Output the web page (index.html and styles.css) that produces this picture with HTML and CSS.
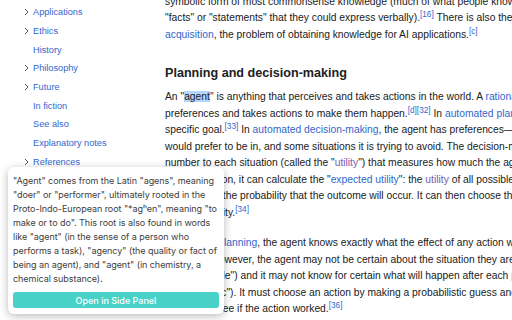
FILE: index.html
```html
<!DOCTYPE html>
<html lang="en">

<head>
	<meta charset="UTF-8" />
	<title>Artificial intelligence</title>
	<link rel="stylesheet" href="styles.css">
</head>

<body>
	<div class="page">
		<nav class="toc">
			<a class="toc-item has-kids"><span class="chev"><svg viewBox="0 0 5 8"><polyline points="1,1 4,4 1,7"/></svg></span>Applications</a>
			<a class="toc-item has-kids"><span class="chev"><svg viewBox="0 0 5 8"><polyline points="1,1 4,4 1,7"/></svg></span>Ethics</a>
			<a class="toc-item"><span class="chev"></span>History</a>
			<a class="toc-item has-kids"><span class="chev"><svg viewBox="0 0 5 8"><polyline points="1,1 4,4 1,7"/></svg></span>Philosophy</a>
			<a class="toc-item has-kids"><span class="chev"><svg viewBox="0 0 5 8"><polyline points="1,1 4,4 1,7"/></svg></span>Future</a>
			<a class="toc-item"><span class="chev"></span>In fiction</a>
			<a class="toc-item"><span class="chev"></span>See also</a>
			<a class="toc-item"><span class="chev"></span>Explanatory notes</a>
			<a class="toc-item has-kids"><span class="chev"><svg viewBox="0 0 5 8"><polyline points="1,1 4,4 1,7"/></svg></span>References</a>
		</nav>

		<main class="content">
			<p class="first">symbolic form of most commonsense knowledge (much of what people know is not represented as<br>
				"facts" or "statements" that they could express verbally).<sup class="ref">[16]</sup> There is also the difficulty of <a>knowledge</a><br>
				<a>acquisition</a>, the problem of obtaining knowledge for AI applications.<sup class="ref">[c]</sup></p>

			<h3>Planning and decision-making</h3>

			<p>An "<span class="picked">agent</span>" is anything that perceives and takes actions in the world. A <a>rational agent</a> has goals or<br>
				preferences and takes actions to make them happen.<sup class="ref">[d][32]</sup> In <a>automated planning</a>, the agent has a<br>
				specific goal.<sup class="ref">[33]</sup> In <a>automated decision-making</a>, the agent has preferences—there are some situations it<br>
				would prefer to be in, and some situations it is trying to avoid. The decision-making agent assigns a<br>
				number to each situation (called the "<a class="seen">utility</a>") that measures how much the agent prefers it. For each<br>
				possible action, it can calculate the "<a>expected utility</a>": the <a class="seen">utility</a> of all possible outcomes of the action,<br>
				weighted by the probability that the outcome will occur. It can then choose the action with the maximum<br>
				expected utility.<sup class="ref">[34]</sup></p>

			<p>In classical <a>planning</a>, the agent knows exactly what the effect of any action will be.<sup class="ref">[35]</sup> In most real-world<br>
				problems, however, the agent may not be certain about the situation they are in (it is "unknown" or<br>
				"unobservable") and it may not know for certain what will happen after each possible action (it is not<br>
				"deterministic"). It must choose an action by making a probabilistic guess and then reassess the<br>
				situation to see if the action worked.<sup class="ref">[36]</sup></p>
		</main>
	</div>

	<!-- lookup popup over the article -->
	<div class="popup">
		<p class="popup-text">"Agent" comes from the Latin "agens", meaning<br>
			"doer" or "performer", ultimately rooted in the<br>
			Proto-Indo-European root "*agʰen", meaning "to<br>
			make or to do". This root is also found in words<br>
			like "agent" (in the sense of a person who<br>
			performs a task), "agency" (the quality or fact of<br>
			being an agent), and "agent" (in chemistry, a<br>
			chemical substance).</p>
		<button class="side-btn">Open in Side Panel</button>
	</div>
</body>

</html>
```

FILE: styles.css
```css
html, body {
	margin: 0; padding: 0; height: 100%; overflow: hidden;
	background: #fff;
	font-family: 'Liberation Sans', Arial, sans-serif;
	color: #202122;
}

.page { display: flex; }

/* table of contents */
.toc {
	width: 165px; flex: none;
	display: flex; flex-direction: column;
	padding-top: 3px;
	font-size: 9.2px;
}

.toc-item {
	display: flex; align-items: center;
	height: 18.67px;
	color: #3366cc;
}

.chev { width: 33px; flex: none; display: flex; justify-content: flex-end; padding-right: 4px; box-sizing: border-box; }
.chev svg { width: 5px; height: 8px; fill: none; stroke: #54595d; stroke-width: 1; }

/* article */
.content {
	flex: none; width: 700px;
	font-size: 10.3px; line-height: 16.5px;
	white-space: nowrap;
}

.content p { margin: 0 0 14px; }
.content p.first { margin-top: -6.25px; }

.content a { color: #3366cc; }
.content a.seen { color: #795cb2; }

.content h3 {
	font-size: 12.6px; line-height: 20.2px; font-weight: bold;
	margin: 20px 0 5.6px;
}

.ref { font-size: 80%; line-height: 0; color: #3366cc; }
.picked { background: #b4d5fe; }

/* popup */
.popup {
	position: absolute; left: 8px; top: 167px;
	width: 206px; padding: 7px 5px 6px;
	background: #fff; border-radius: 6px;
	box-shadow: 0 2px 8px rgba(0, 0, 0, 0.28);
	font-family: Inter, 'Noto Sans', sans-serif;
}

.popup-text {
	margin: 0 0 6px;
	font-size: 9px; line-height: 14px;
	color: #404040;
	white-space: nowrap;
	letter-spacing: -0.05px;
}

.side-btn {
	display: block; width: 100%; height: 16px;
	border: 0; border-radius: 3px; padding: 0;
	background: #47d1c7; color: #fff;
	font-family: Inter, sans-serif; font-size: 9px; font-weight: 500;
}
```
